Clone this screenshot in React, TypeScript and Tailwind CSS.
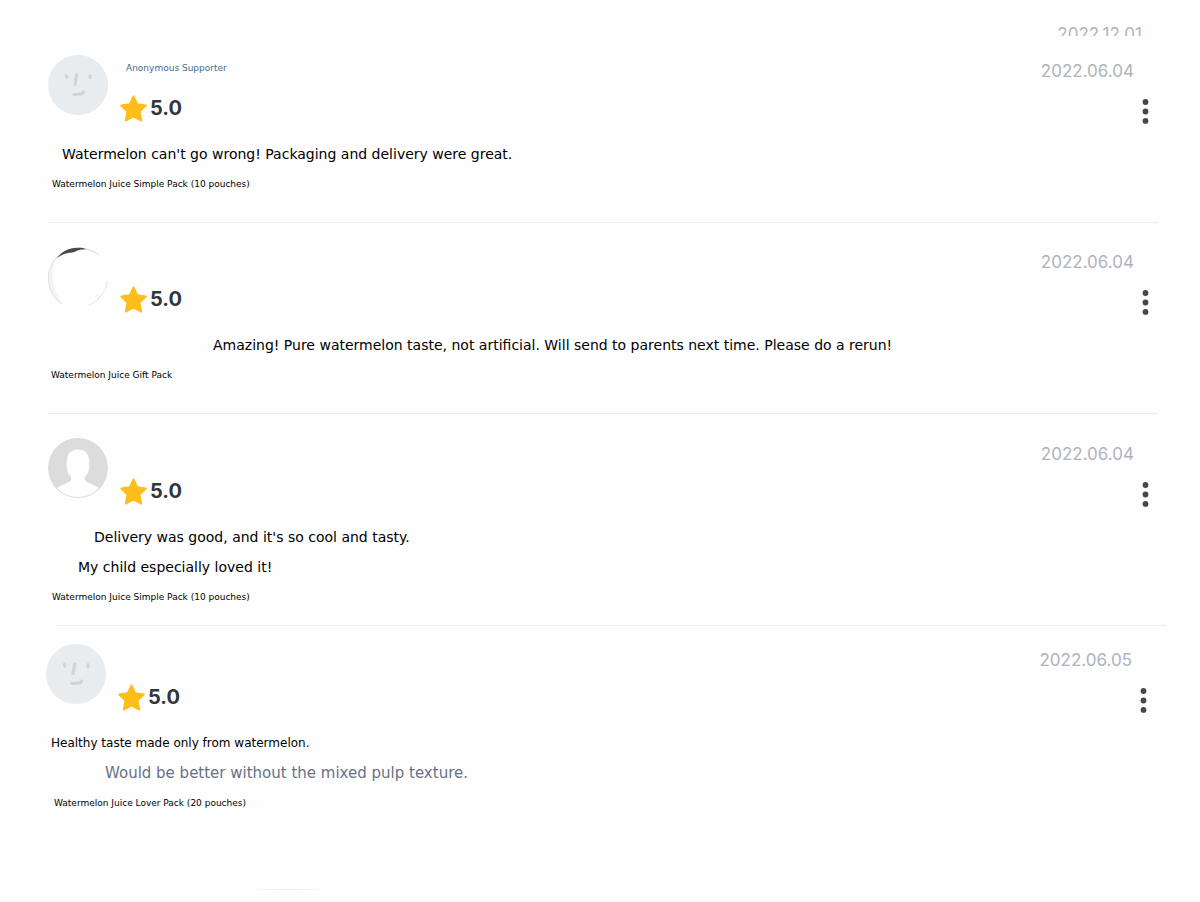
import React from 'react';
import clsx from 'clsx';

type AvatarKind = 'face' | 'photo' | 'person';

interface Line {
    text: string;
    className: string;
}

interface Review {
    id: number;
    name?: string;
    avatar: AvatarKind;
    score: string;
    date: string;
    lines: Line[];
    pack: Line;
    className: string;
}

const reviews: Review[] = [
    {
        id: 1,
        name: 'Anonymous Supporter',
        avatar: 'face',
        score: '5.0',
        date: '2022.06.04',
        lines: [{ text: "Watermelon can't go wrong! Packaging and delivery were great.", className: 'pl-3.5 text-[14px]' }],
        pack: { text: 'Watermelon Juice Simple Pack (10 pouches)', className: 'pl-1' },
        className: 'ml-12 mr-[42px] pt-[19px] pb-[23px] border-b',
    },
    {
        id: 2,
        avatar: 'photo',
        score: '5.0',
        date: '2022.06.04',
        lines: [{ text: 'Amazing! Pure watermelon taste, not artificial. Will send to parents next time. Please do a rerun!', className: 'pl-[165px] text-[14px]' }],
        pack: { text: 'Watermelon Juice Gift Pack', className: 'pl-[3px]' },
        className: 'ml-12 mr-[42px] pt-[23px] pb-[23px] border-b',
    },
    {
        id: 3,
        avatar: 'person',
        score: '5.0',
        date: '2022.06.04',
        lines: [
            { text: "Delivery was good, and it's so cool and tasty.", className: 'pl-[46px] text-[14px]' },
            { text: 'My child especially loved it!', className: 'pl-[30px] text-[14px]' },
        ],
        pack: { text: 'Watermelon Juice Simple Pack (10 pouches)', className: 'pl-1' },
        className: 'ml-12 mr-[42px] pt-6 pb-[13px]',
    },
    {
        id: 4,
        avatar: 'face',
        score: '5.0',
        date: '2022.06.05',
        lines: [
            { text: 'Healthy taste made only from watermelon.', className: 'pl-[5px] text-[12px]' },
            { text: 'Would be better without the mixed pulp texture.', className: 'pl-[59px] text-[15px] text-[#687186]' },
        ],
        pack: { text: 'Watermelon Juice Lover Pack (20 pouches)', className: 'pl-2' },
        className: 'ml-[46px] mr-11 pt-[18px]',
    },
];

const Avatar = ({ kind }: { kind: AvatarKind }) => (
    <svg viewBox="0 0 60 60" className="w-[60px] h-[60px] shrink-0 overflow-visible" aria-hidden="true">
        {kind === 'face' && (
            <>
                <circle cx="30" cy="30" r="30" fill="#e8ecef" />
                <g stroke="#cfd4d8" fill="none" strokeLinecap="round">
                    <path d="M18.2 20.4l.5 1.8M42 20.4v2.4" strokeWidth="3" />
                    <path d="M28.8 19.8l-1.8 9.8" strokeWidth="3.2" />
                    <path d="M25.8 39.4l7.2-.4c1.8-.1 2.2-.6 2.4-2" strokeWidth="3" />
                </g>
            </>
        )}
        {kind === 'photo' && (
            <g fill="none">
                <path d="M9 11C-1 23-2 36 4 46C7 52 11 56 15 58C4 46 1 26 9 11z" fill="#f1f3f3" />
                <path d="M8 12C2 19 0 27 .5 34C1 44 6 53 14 58" stroke="#dfe2e2" strokeWidth="1" />
                <path d="M8.500 12.500C14 5 22 1.500 30 1.800C34 1.700 37 2.400 39.500 3.400C34 3.200 31 4 27 5.700C22 7.300 16 6.200 8.500 12.500z" fill="#48494a" />
                <path d="M39 3.300C44 4.500 48 6.500 51 9" stroke="#d6d6d6" strokeWidth="1" />
                <path d="M59.500 35C58 45 52 54 41 59" stroke="#e6e7e7" strokeWidth="1" />
                <path d="M47 51l4-3M49 53l4-4" stroke="#eceded" strokeWidth="1" />
            </g>
        )}
        {kind === 'person' && (
            <>
                <circle cx="30" cy="30" r="30" fill="#dcdcdc" />
                <path d="M30 11.500C23 11.500 18.800 16 18.800 22.500V28.500C18.800 33.500 20.500 36.500 23 38.800C24.300 41.500 22.500 43.500 19.500 44.800C15.500 46.400 12 48 9 50C20 62 40 62 51 50C48 48 44.500 46.400 40.500 44.800C37.500 43.500 35.700 41.500 37 38.800C39.500 36.500 41.200 33.500 41.200 28.500V22.500C41.200 16 37 11.500 30 11.500z" fill="#fefefe" />
            </>
        )}
    </svg>
);

const Star = () => (
    <svg viewBox="0 0 27 27" className="w-[27px] h-[27px]" aria-hidden="true">
        <path
            d="M13.500 1.500L17.200 9.300L25.700 10.500L19.500 16.500L21.200 25.500L13.500 21.300L5.800 25.500L7.500 16.500L1.300 10.500L9.800 9.300z"
            fill="#fdbe1c"
            stroke="#fdbe1c"
            strokeWidth="2"
            strokeLinejoin="round"
        />
    </svg>
);

const MoreButton = () => (
    <button type="button" aria-label="More" className="w-[26px] h-12 flex items-center justify-center">
        <svg viewBox="0 0 8 26" className="w-2 h-[26px]" fill="#464748" aria-hidden="true">
            <circle cx="4.500" cy="4" r="2.900" />
            <circle cx="4.500" cy="13.500" r="2.900" />
            <circle cx="4.500" cy="22.900" r="2.900" />
        </svg>
    </button>
);

const ReviewItem = ({ review }: { review: Review }) => (
    <li className={clsx('border-[#ededed]', review.className)}>
        <div className="flex h-[84px]">
            <Avatar kind={review.avatar} />
            <div className="ml-3">
                <div className="h-[26px] pl-1.5 text-[9px] leading-[26px] text-[#456a8c]">{review.name}</div>
                <div className="h-[54px] flex items-center gap-[3px]">
                    <Star />
                    <span className="font-['Inter',sans-serif] font-bold text-[20px] text-[#32373b]">{review.score}</span>
                </div>
            </div>
            <div className="ml-auto flex flex-col items-end">
                <time className="pr-6 font-['Inter',sans-serif] text-[17px] leading-8 text-[#afb4ba]">{review.date}</time>
                <MoreButton />
            </div>
        </div>
        {review.lines.map(line => (
            <p key={line.text} className={clsx('leading-[30px]', line.className)}>{line.text}</p>
        ))}
        <p className={clsx('text-[9px] leading-[30px]', review.pack.className)}>{review.pack.text}</p>
    </li>
);

export default function App() {
    return (
        <main className="min-h-screen bg-[#fefefe] text-black font-['DejaVu_Sans',sans-serif]">
            {/* tail of the previous review, cut off by the list */}
            <div className="h-9 overflow-hidden pt-[18px] pr-[58px] text-right">
                <time className="block font-['Inter',sans-serif] text-[17px] leading-8 text-[#afb4ba]">2022.12.01</time>
            </div>
            <ul>
                {reviews.map(r => (
                    <React.Fragment key={r.id}>
                        {r.id === 4 && <li role="separator" className="ml-14 mr-[34px] h-px bg-[#ededed]" />}
                        <ReviewItem review={r} />
                    </React.Fragment>
                ))}
            </ul>
            <div className="mt-[71px] ml-[250px] w-[76px] h-px bg-linear-to-r from-transparent via-[#e6e6e6] to-transparent" />
        </main>
    );
}
